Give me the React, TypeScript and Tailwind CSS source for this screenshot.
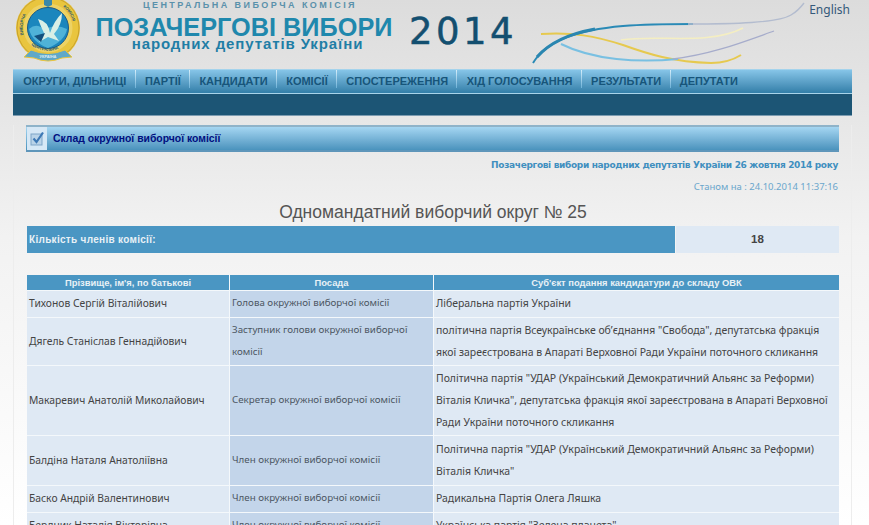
const navItems = [
  'ОКРУГИ, ДІЛЬНИЦІ',
  'ПАРТІЇ',
  'КАНДИДАТИ',
  'КОМІСІЇ',
  'СПОСТЕРЕЖЕННЯ',
  'ХІД ГОЛОСУВАННЯ',
  'РЕЗУЛЬТАТИ',
  'ДЕПУТАТИ',
];

const rows = [
  {
    name: 'Тихонов Сергій Віталійович',
    post: ['Голова окружної виборчої комісії'],
    party: ['Ліберальна партія України'],
    h: 'h-[27px]',
  },
  {
    name: 'Дягель Станіслав Геннадійович',
    post: ['Заступник голови окружної виборчої', 'комісії'],
    party: [
      'політична партія Всеукраїнське об’єднання "Свобода", депутатська фракція',
      'якої зареєстрована в Апараті Верховної Ради України поточного скликання',
    ],
    h: 'h-[48px]',
  },
  {
    name: 'Макаревич Анатолій Миколайович',
    post: ['Секретар окружної виборчої комісії'],
    party: [
      'Політична партія "УДАР (Український Демократичний Альянс за Реформи)',
      'Віталія Кличка", депутатська фракція якої зареєстрована в Апараті Верховної',
      'Ради України поточного скликання',
    ],
    h: 'h-[70px]',
  },
  {
    name: 'Балдіна Наталя Анатоліївна',
    post: ['Член окружної виборчої комісії'],
    party: ['Політична партія "УДАР (Український Демократичний Альянс за Реформи)', 'Віталія Кличка"'],
    h: 'h-[50px]',
  },
  {
    name: 'Баско Андрій Валентинович',
    post: ['Член окружної виборчої комісії'],
    party: ['Радикальна Партія Олега Ляшка'],
    h: 'h-[27px]',
  },
  {
    name: 'Бердник Наталія Вікторівна',
    post: ['Член окружної виборчої комісії'],
    party: ['Українська партія "Зелена планета"'],
    h: 'h-[27px]',
  },
];

function Emblem() {
  return (
    <svg width="68" height="70" viewBox="0 0 68 70" className="shrink-0">
      <defs>
        <path id="ringLeft" d="M11 46 A27 27 0 0 1 33 6" />
        <path id="ringRight" d="M33 6 A27 27 0 0 1 55 46" />
        <path id="ringBottom" d="M10 42 A26 26 0 0 0 56 42" />
      </defs>
      <circle cx="33" cy="33" r="32" fill="#e9c53e" />
      <circle cx="33" cy="33" r="31" fill="none" stroke="#c9a12c" strokeWidth="1" />
      <circle cx="33" cy="33" r="24.5" fill="#edd264" />
      <circle cx="33" cy="33" r="20.5" fill="#1b86bd" stroke="#1b5a86" strokeWidth="1" />
      <path d="M14 34 Q22 27 29 35 Q40 28 52 34 Q50 46 33 53 Q17 47 14 34Z" fill="#4fb2d8" />
      <path d="M23 24 Q33 26 35 38 Q39 26 47 18 Q47 30 39 39 L44 46 L33 42 L24 47 L29 38 Q26 32 23 24Z" fill="#d9efe6" />
      <path d="M19 41 L30 38 L26 47Z" fill="#12507d" />
      <path d="M29 2 L33 -1 L37 2 L37 10 L33 12 L29 10Z" fill="#3a88a8" />
      <g fill="#2a5a6e" fontFamily="Liberation Sans, sans-serif" fontSize="4.2" fontWeight="700">
        <text>
          <textPath href="#ringLeft" startOffset="12%">ВИБОРЧА</textPath>
        </text>
        <text>
          <textPath href="#ringRight" startOffset="30%">КОМІСІЯ</textPath>
        </text>
        <text>
          <textPath href="#ringBottom" startOffset="18%">ЦЕНТРАЛЬНА</textPath>
        </text>
      </g>
      <path d="M16 55 Q33 62 50 55 L57 62 L47 63 Q33 69 19 63 L9 62Z" fill="#5fa8c8" stroke="#e9c53e" strokeWidth="1" />
      <text x="33" y="63" textAnchor="middle" fontFamily="Liberation Sans, sans-serif" fontSize="4" fontWeight="700" fill="#dfeef5">
        УКРАЇНА
      </text>
    </svg>
  );
}

function Waves() {
  return (
    <svg width="290" height="68" viewBox="0 0 290 68" className="shrink-0" fill="none">
      <path d="M18 34 C50 32 72 36 100 45 C125 54 150 62 188 63 C200 63 210 60 218 55" stroke="#e6c94f" strokeWidth="2" />
      <path d="M98 40 C135 34 185 46 220 28" stroke="#f4eec2" strokeWidth="1.6" />
      <path d="M38 44 C70 60 115 63 155 59" stroke="#79c0e2" strokeWidth="2" />
      <path d="M150 59 C190 54 220 42 251 31" stroke="#a6accb" strokeWidth="1.3" />
      <path d="M10 63 C24 40 55 30 100 26 C125 24 150 24 170 24" stroke="#2a8ab6" strokeWidth="2" />
      <path d="M14 57 C28 41 50 33 72 29" stroke="#2a86b0" strokeWidth="3" />
      <path d="M165 24 C210 24 255 23 268 15 C275 11 278 7 281 3" stroke="#b3bccf" strokeWidth="1.4" />
    </svg>
  );
}

function CheckIcon() {
  return (
    <svg width="15" height="15" viewBox="0 0 15 15" fill="none">
      <rect x="1" y="3" width="11" height="11" fill="#b9d3e8" stroke="#7fa5c8" />
      <path d="M3.5 7.5 L6.5 11 L13 1.5" stroke="#3d78b5" strokeWidth="2.2" />
    </svg>
  );
}

export default function App() {
  return (
    <div className="h-[525px] overflow-hidden bg-gradient-to-b from-[#dcdcdc] via-[#f2f2f2] via-[45%] to-white font-['Liberation_Sans',sans-serif]">
      <header className="relative flex h-[69px] items-start overflow-hidden pl-[15px]">
        <div className="-mt-[5px] mr-[11px]">
          <Emblem />
        </div>
        <div className="flex w-[300px] shrink-0 flex-col items-center">
          <div className="ml-[12px] h-[10px] text-[9px] leading-[10px] font-bold whitespace-nowrap tracking-[2.45px] text-[#5a91ab]">
            ЦЕНТРАЛЬНА ВИБОРЧА КОМІСІЯ
          </div>
          <div className="mt-[6px] h-[22px] text-[25.3px] leading-[22px] font-bold whitespace-nowrap text-[#1f88ad]">ПОЗАЧЕРГОВІ ВИБОРИ</div>
          <div className="ml-[7px] h-[11px] text-[15px] leading-[11px] font-bold whitespace-nowrap tracking-[0.9px] text-[#1f7ea6]">
            народних депутатів України
          </div>
        </div>
        <div className="mt-[11px] ml-[15px] font-['DejaVu_Sans',sans-serif] text-[37px] leading-[42px] tracking-[3.5px] text-[#134f70] [-webkit-text-stroke:0.5px_#134f70]">
          2014
        </div>
        <div className="ml-[6px]">
          <Waves />
        </div>
        <a className="absolute top-px right-[19px] font-['Noto_Sans',sans-serif] text-[12px] text-[#35597a]">English</a>
      </header>

      <div className="mr-[17px] ml-[13px] h-[47px] border-b border-[#7d9cb1] bg-[#1c5575]">
        <nav className="flex h-[25px] border-t border-b border-t-[#a4d3ec] border-b-[#a8d4ea] bg-gradient-to-b from-[#86c5e8] to-[#327fa9] pl-px">
          {navItems.map((item, i) => (
            <div key={item} className="relative flex h-full items-center px-[9.3px] text-[11px] font-bold whitespace-nowrap text-[#17557a]">
              {item}
              {i < navItems.length - 1 && (
                <span className="absolute top-0 right-0 h-[18px] w-px bg-gradient-to-b from-[#d5edf9] to-[#6eb2d8]" />
              )}
            </div>
          ))}
        </nav>
      </div>

      <main className="mr-[17px] ml-[13px] h-[409px] border-x border-[#ededed] px-[12px]">
        <div className="mt-[9px] flex h-[27px] items-center border-t-2 border-b-2 border-t-[#8fb3c9] border-b-[#5f96ba] bg-gradient-to-b from-[#a5d6f2] to-[#4a93bd]">
          <div className="ml-px flex h-full w-[20px] items-center justify-center bg-[#d6e8f6]">
            <CheckIcon />
          </div>
          <div className="ml-[6px] text-[10.4px] font-bold text-[#000f80]">Склад окружної виборчої комісії</div>
        </div>

        <div className="mt-[6px] pr-px text-right font-['DejaVu_Sans',sans-serif] text-[9px] leading-[14px] font-bold tracking-[-0.33px] text-[#3f8fbf]">
          Позачергові вибори народних депутатів України 26 жовтня 2014 року
        </div>
        <div className="mt-[8px] pr-px text-right font-['Noto_Sans',sans-serif] text-[9.5px] leading-[14px] text-[#6aa6cc]">
          Станом на : 24.10.2014 11:37:16
        </div>
        <h1 className="mt-[7px] ml-px h-[25px] text-center text-[17.5px] leading-[22px] text-[#555]">
          Одномандатний виборчий округ № 25
        </h1>

        <div className="ml-px flex h-[27px] gap-px">
          <div className="flex w-[648px] items-center bg-[#4a96c3] pl-[2px] text-[10px] font-bold tracking-[0.3px] text-[#e8f1f6]">
            Кількість членів комісії:
          </div>
          <div className="flex flex-1 items-center justify-center bg-[#dfe9f4] text-[11.5px] font-bold text-[#444]">18</div>
        </div>

        <table className="mt-[22px] ml-px w-[812px] table-fixed border-separate border-spacing-0 font-['Noto_Sans',sans-serif] text-[10.45px] leading-[22px] text-[#444]">
          <thead>
            <tr className="h-[16px] text-center font-['Liberation_Sans',sans-serif] text-[9.4px] leading-[14px] text-[#e8f1f6]">
              <th className="w-[203px] border-r border-b border-[#f4f8fb] bg-[#4a96c3] font-bold">Прізвище, ім'я, по батькові</th>
              <th className="w-[204px] border-r border-b border-[#f4f8fb] bg-[#4a96c3] font-bold">Посада</th>
              <th className="border-b border-[#f4f8fb] bg-[#4a96c3] font-bold">Суб'єкт подання кандидатури до складу ОВК</th>
            </tr>
          </thead>
          <tbody>
            {rows.map((row) => (
              <tr key={row.name} className={row.h}>
                <td className="border-r border-b border-[#f4f8fb] bg-[#dfe9f4] pb-[2px] pl-[2px] align-middle text-[10.3px]">{row.name}</td>
                <td className="border-r border-b border-[#f4f8fb] bg-[#c3d5ea] pb-[2px] pl-[2px] align-middle text-[9.75px] text-[#4c5662]">
                  {row.post.map((line) => (
                    <div key={line}>{line}</div>
                  ))}
                </td>
                <td className="border-b border-[#f4f8fb] bg-[#dfe9f4] pb-[2px] pl-[2px] align-middle">
                  {row.party.map((line) => (
                    <div key={line} className="whitespace-nowrap">
                      {line}
                    </div>
                  ))}
                </td>
              </tr>
            ))}
          </tbody>
        </table>
      </main>
    </div>
  );
}
